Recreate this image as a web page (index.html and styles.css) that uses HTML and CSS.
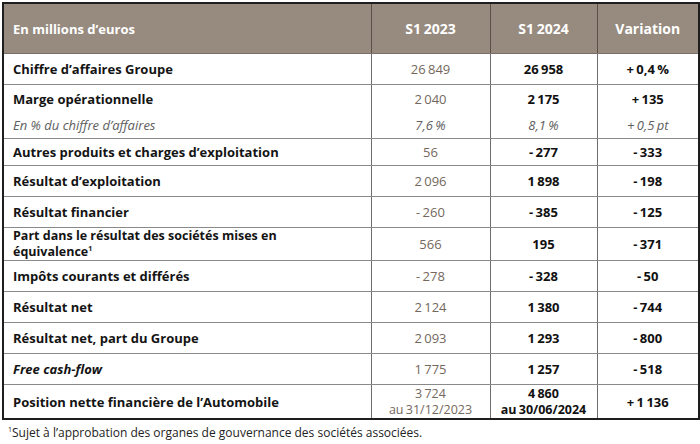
FILE: index.html
```html
<!DOCTYPE html>
<html lang="fr">
<head>
<meta charset="utf-8">
<title>Résultats S1 2024</title>
<link rel="stylesheet" href="styles.css">
</head>
<body>
<div class="wrap">
<table class="fin">
  <colgroup>
    <col class="c-label"><col class="c-y1"><col class="c-y2"><col class="c-var">
  </colgroup>
  <thead>
    <tr class="r-head">
      <th class="lbl">En millions d’euros</th>
      <th class="num">S1 2023</th>
      <th class="num">S1 2024</th>
      <th>Variation</th>
    </tr>
  </thead>
  <tbody>
    <tr class="r31">
      <td class="lbl">Chiffre d’affaires Groupe</td>
      <td class="old num">26 849</td><td class="new num">26 958</td><td class="var num">+ 0,4 %</td>
    </tr>
    <tr class="r28 nob">
      <td class="lbl">Marge opérationnelle</td>
      <td class="old num">2 040</td><td class="new num">2 175</td><td class="var num">+ 135</td>
    </tr>
    <tr class="r27 it">
      <td class="lbl">En % du chiffre d’affaires</td>
      <td class="num">7,6 %</td><td class="num">8,1 %</td><td class="num">+ 0,5 pt</td>
    </tr>
    <tr class="r27">
      <td class="lbl">Autres produits et charges d’exploitation</td>
      <td class="old num">56</td><td class="new num">- 277</td><td class="var num">- 333</td>
    </tr>
    <tr class="r31">
      <td class="lbl">Résultat d’exploitation</td>
      <td class="old num">2 096</td><td class="new num">1 898</td><td class="var num">- 198</td>
    </tr>
    <tr class="r31">
      <td class="lbl">Résultat financier</td>
      <td class="old num">- 260</td><td class="new num">- 385</td><td class="var num">- 125</td>
    </tr>
    <tr class="r33">
      <td class="lbl two">Part dans le résultat des sociétés mises en<br>équivalence<sup>1</sup></td>
      <td class="old num">566</td><td class="new num">195</td><td class="var num">- 371</td>
    </tr>
    <tr class="r31">
      <td class="lbl">Impôts courants et différés</td>
      <td class="old num">- 278</td><td class="new num">- 328</td><td class="var num">- 50</td>
    </tr>
    <tr class="r31">
      <td class="lbl">Résultat net</td>
      <td class="old num">2 124</td><td class="new num">1 380</td><td class="var num">- 744</td>
    </tr>
    <tr class="r31">
      <td class="lbl">Résultat net, part du Groupe</td>
      <td class="old num">2 093</td><td class="new num">1 293</td><td class="var num">- 800</td>
    </tr>
    <tr class="r31">
      <td class="lbl"><em>Free cash-flow</em></td>
      <td class="old num">1 775</td><td class="new num">1 257</td><td class="var num">- 518</td>
    </tr>
    <tr class="r34">
      <td class="lbl">Position nette financière de l’Automobile</td>
      <td class="old stack"><span class="num">3 724</span><br><span class="num">au 31/12/2023</span></td>
      <td class="new stack"><span class="num">4 860</span><br><span class="num">au 30/06/2024</span></td>
      <td class="var num">+ 1 136</td>
    </tr>
  </tbody>
</table>
<p class="note"><sup>1</sup>Sujet à l’approbation des organes de gouvernance des sociétés associées.</p>
</div>
</body>
</html>
```

FILE: styles.css
```css
html, body {
  margin: 0;
  padding: 0;
  background: #ffffff;
}

body {
  font-family: "Open Sans", "Liberation Sans", sans-serif;
  color: #141414;
}

.wrap {
  padding: 2px 0 0 2px;
}

.fin {
  border-collapse: collapse;
  width: 696px;
  table-layout: fixed;
  border: 2px solid #1e1e1e;
  font-size: 13px;
}

.c-label { width: 368px; }
.c-y1 { width: 119px; }
.c-y2 { width: 107px; }
.c-var { width: 102px; }

.fin th,
.fin td {
  border-left: 1px solid #6e6e6e;
  border-right: 1px solid #6e6e6e;
  border-bottom: 1px solid #8a8a8a;
  padding: 0 6px;
  text-align: center;
  vertical-align: middle;
  line-height: 16px;
}

.num {
  white-space: nowrap;
  word-spacing: -1px;
}

.fin th {
  background: #978b7f;
  color: #ffffff;
  font-weight: 700;
  font-size: 14px;
  height: 49px;
  border-left-color: #5a5048;
  border-right-color: #5a5048;
  border-bottom-color: #7a7068;
}

.fin .lbl {
  text-align: left;
  padding-left: 9px;
  font-weight: 700;
  color: #141414;
}

.fin th.lbl {
  color: #ffffff;
  font-size: 13px;
}

.r31 td { height: 30px; }
.r28 td { height: 27px; }
.r27 td { height: 26px; }
.r33 td { height: 32px; }
.r34 td { height: 33px; }

.nob td { border-bottom: none; }

.old {
  color: #74685d;
  font-weight: 500;
}

.new,
.var {
  font-weight: 700;
  color: #111111;
}

.it td,
.it td.lbl {
  font-style: italic;
  font-weight: 400;
  color: #5e5e5e;
}

.fin .two {
  line-height: 16px;
  font-size: 12.5px;
}

.fin .stack {
  line-height: 16px;
  font-size: 12.5px;
}

sup {
  font-size: 7px;
  line-height: 0;
  vertical-align: 5px;
}

.note {
  margin: 4px 0 0 6px;
  font-size: 12px;
  line-height: 17px;
  color: #222222;
}

.note sup {
  font-size: 7px;
  vertical-align: 5px;
}
```
